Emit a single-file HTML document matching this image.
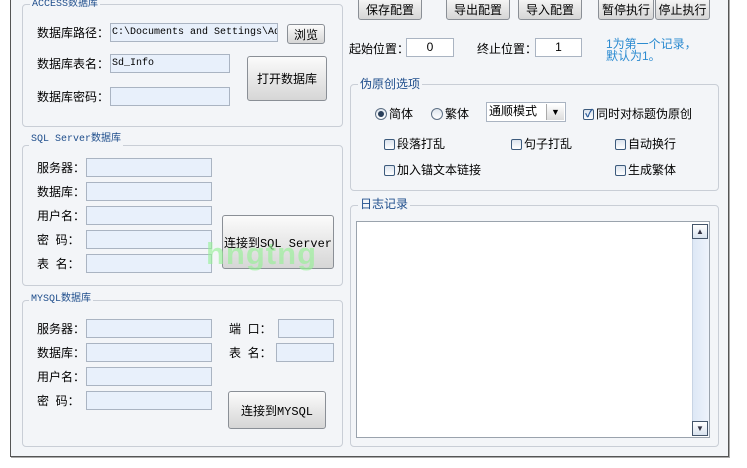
<!DOCTYPE html><html><head><meta charset="utf-8"><style>
body{margin:0;width:747px;height:468px;background:#fff;position:relative;overflow:hidden;font-family:"Liberation Sans","Noto Sans CJK SC","WenQuanYi Zen Hei",sans-serif;font-size:12px;color:#000}
.frame{position:absolute;left:10px;top:-5px;width:717px;height:461px;border:1px solid #555;border-top:none;background:#f3f5f8;box-shadow:1px 1px 0 #aaa}
.a{position:absolute}
.g{position:absolute;border:1px solid #c9ced6;border-radius:4px}
.lg{position:absolute;background:#f3f5f8;color:#1f4e8c;padding:0 2px;line-height:14px;font-size:12px}
.mono{font-family:"Liberation Mono","Noto Sans CJK SC",monospace;font-size:10px}
.in{position:absolute;background:#e8f0fb;border:1px solid #aab4c2;box-sizing:border-box;height:19px}
.w{background:#fff}
.b{position:absolute;box-sizing:border-box;border:1px solid #8a8f96;border-radius:3px;background:linear-gradient(#fbfbfb,#e8e8e8 50%,#d6d6d6);display:flex;align-items:center;justify-content:center;font-size:12px}
.l{position:absolute;line-height:14px}
.cb{display:inline-block;width:11px;height:11px;border:1px solid #3c5a7c;border-radius:2px;background:linear-gradient(#dbe4ee,#fff);vertical-align:-2px;margin-right:2px;box-sizing:border-box}
.rd{display:inline-block;width:12px;height:12px;border:1px solid #5d6f84;border-radius:50%;background:linear-gradient(#dfe6ee,#fff);vertical-align:-2px;margin-right:2px;box-sizing:border-box;position:relative}
</style></head><body>
<div class="frame"></div>
<!-- ACCESS -->
<div class="g" style="left:22px;top:4px;width:319px;height:121px"></div>
<div class="lg mono" style="left:30px;top:-2px">ACCESS数据库</div>
<div class="l" style="left:37px;top:26px">数据库路径：</div>
<div class="in mono" style="left:110px;top:23px;width:168px;padding:2px 1px;white-space:nowrap;overflow:hidden;line-height:14px">C:\Documents and Settings\Ad</div>
<div class="b" style="left:287px;top:24px;width:38px;height:20px">浏览</div>
<div class="l" style="left:37px;top:57px">数据库表名：</div>
<div class="in mono" style="left:110px;top:54px;width:120px;padding:2px 1px;line-height:14px">Sd_Info</div>
<div class="b" style="left:247px;top:56px;width:80px;height:45px">打开数据库</div>
<div class="l" style="left:37px;top:90px">数据库密码：</div>
<div class="in" style="left:110px;top:87px;width:120px"></div>
<!-- SQL -->
<div class="g" style="left:22px;top:145px;width:319px;height:139px"></div>
<div class="lg mono" style="left:29px;top:133px">SQL Server数据库</div>
<div class="l" style="left:37px;top:161px">服务器：</div><div class="in" style="left:86px;top:158px;width:126px"></div>
<div class="l" style="left:37px;top:185px">数据库：</div><div class="in" style="left:86px;top:182px;width:126px"></div>
<div class="l" style="left:37px;top:209px">用户名：</div><div class="in" style="left:86px;top:206px;width:126px"></div>
<div class="l" style="left:37px;top:233px">密&nbsp;&nbsp;码：</div><div class="in" style="left:86px;top:230px;width:126px"></div>
<div class="l" style="left:37px;top:257px">表&nbsp;&nbsp;名：</div><div class="in" style="left:86px;top:254px;width:126px"></div>
<div class="b mono" style="left:222px;top:215px;width:112px;height:54px">连接到SQL Server</div>
<div class="a" style="left:206px;top:236px;font:bold 31px 'Liberation Sans',sans-serif;color:rgba(150,240,150,.65);letter-spacing:1px">hngtng</div>
<!-- MYSQL -->
<div class="g" style="left:22px;top:300px;width:319px;height:145px"></div>
<div class="lg mono" style="left:29px;top:293px">MYSQL数据库</div>
<div class="l" style="left:37px;top:322px">服务器：</div><div class="in" style="left:86px;top:319px;width:126px"></div>
<div class="l" style="left:37px;top:346px">数据库：</div><div class="in" style="left:86px;top:343px;width:126px"></div>
<div class="l" style="left:37px;top:370px">用户名：</div><div class="in" style="left:86px;top:367px;width:126px"></div>
<div class="l" style="left:37px;top:394px">密&nbsp;&nbsp;码：</div><div class="in" style="left:86px;top:391px;width:126px"></div>
<div class="l" style="left:229px;top:322px">端&nbsp;&nbsp;口：</div><div class="in" style="left:278px;top:319px;width:56px"></div>
<div class="l" style="left:229px;top:346px">表&nbsp;&nbsp;名：</div><div class="in" style="left:276px;top:343px;width:58px"></div>
<div class="b mono" style="left:228px;top:391px;width:98px;height:38px">连接到MYSQL</div>
<!-- right -->
<div class="b" style="left:358px;top:-5px;width:64px;height:25px;padding-top:4px">保存配置</div>
<div class="b" style="left:446px;top:-5px;width:64px;height:25px;padding-top:4px">导出配置</div>
<div class="b" style="left:518px;top:-5px;width:64px;height:25px;padding-top:4px">导入配置</div>
<div class="b" style="left:598px;top:-5px;width:56px;height:25px;padding-top:4px">暂停执行</div>
<div class="b" style="left:655px;top:-5px;width:55px;height:25px;padding-top:4px">停止执行</div>
<div class="l" style="left:349px;top:42px">起始位置：</div>
<div class="in w" style="left:406px;top:38px;width:48px;text-align:center;line-height:17px">0</div>
<div class="l" style="left:477px;top:42px">终止位置：</div>
<div class="in w" style="left:535px;top:38px;width:47px;text-align:center;line-height:17px">1</div>
<div class="l" style="left:606px;top:38px;color:#2a8ad0;line-height:12px">1为第一个记录，<br>默认为1。</div>
<div class="g" style="left:350px;top:84px;width:367px;height:105px"></div>
<div class="lg" style="left:358px;top:77px">伪原创选项</div>
<div class="l" style="left:375px;top:107px"><span class="rd"><span style="position:absolute;left:2px;top:2px;width:6px;height:6px;border-radius:50%;background:#2a3f5a"></span></span>简体</div>
<div class="l" style="left:431px;top:107px"><span class="rd"></span>繁体</div>
<div class="in w" style="left:486px;top:102px;width:80px;height:20px;line-height:16px;padding-left:2px">通顺模式<span style="position:absolute;right:1px;top:1px;width:17px;height:16px;background:linear-gradient(#fff,#dcdcdc);border-left:1px solid #aaa;font-size:9px;text-align:center;line-height:16px">▼</span></div>
<div class="l" style="left:583px;top:107px"><span class="cb" style="position:relative"><span style="position:absolute;left:1px;top:-3px;color:#2a5b9a;font-size:11px;font-weight:bold">✓</span></span>同时对标题伪原创</div>
<div class="l" style="left:384px;top:137px"><span class="cb"></span>段落打乱</div>
<div class="l" style="left:511px;top:137px"><span class="cb"></span>句子打乱</div>
<div class="l" style="left:615px;top:137px"><span class="cb"></span>自动换行</div>
<div class="l" style="left:384px;top:163px"><span class="cb"></span>加入锚文本链接</div>
<div class="l" style="left:615px;top:163px"><span class="cb"></span>生成繁体</div>
<div class="g" style="left:350px;top:205px;width:367px;height:240px"></div>
<div class="lg" style="left:358px;top:197px">日志记录</div>
<div class="a" style="left:356px;top:221px;width:354px;height:217px;background:#fff;border:1px solid #9aa3ad;box-sizing:border-box"></div>
<div class="a" style="left:692px;top:224px;width:16px;height:212px;background:linear-gradient(90deg,#dde8f6,#eef3fb);border-left:1px solid #c8d4e4"></div>
<div class="a" style="left:692px;top:224px;width:16px;height:15px;box-sizing:border-box;border:1px solid #44556a;background:linear-gradient(#fff,#d8e2ee);font-size:8px;text-align:center;line-height:13px;color:#334">▲</div>
<div class="a" style="left:692px;top:421px;width:16px;height:15px;box-sizing:border-box;border:1px solid #44556a;background:linear-gradient(#fff,#d8e2ee);font-size:8px;text-align:center;line-height:13px;color:#334">▼</div>
</body></html>
